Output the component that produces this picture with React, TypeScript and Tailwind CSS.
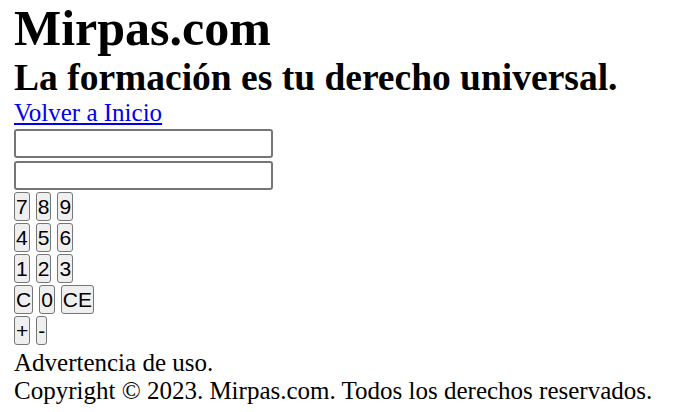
const serif = { fontFamily: '"Liberation Serif", "Times New Roman", serif' };

const rows = [
  ["7", "8", "9"],
  ["4", "5", "6"],
  ["1", "2", "3"],
  ["C", "0", "CE"],
  ["+", "-"],
];

function Key({ label }: { label: string }) {
  return (
    <button
      type="button"
      className="h-[29px] px-[1px] border-[1.5px] border-[#767676] rounded-[3px] bg-[#efefef] text-[21px] leading-none text-black font-['Liberation_Sans',Arial,sans-serif]"
    >
      {label}
    </button>
  );
}

export default function App() {
  return (
    <div className="min-h-screen bg-white text-black px-[14px]" style={serif}>
      <h1 className="text-[50px] font-bold leading-[56px]">Mirpas.com</h1>
      <h2 className="text-[37.5px] font-bold leading-[43px]">La formación es tu derecho universal.</h2>
      <a href="#" className="block text-[25px] leading-[28px] text-[#0000ee] underline">
        Volver a Inicio
      </a>

      <div className="flex flex-col gap-[3px] mt-[2px]">
        <input type="text" className="w-[259px] h-[29px] border-2 border-[#767676] rounded-[3px] bg-white" />
        <input type="text" className="w-[259px] h-[29px] border-2 border-[#767676] rounded-[3px] bg-white" />
      </div>

      <div className="flex flex-col gap-[2px] mt-[2px]">
        {rows.map((row, i) => (
          <div key={i} className="flex gap-[6px]">
            {row.map((k) => (
              <Key key={k} label={k} />
            ))}
          </div>
        ))}
      </div>

      <p className="text-[25px] leading-[28px] mt-[4px]">Advertencia de uso.</p>
      <p className="text-[25px] leading-[28px]">Copyright © 2023. Mirpas.com. Todos los derechos reservados.</p>
    </div>
  );
}
